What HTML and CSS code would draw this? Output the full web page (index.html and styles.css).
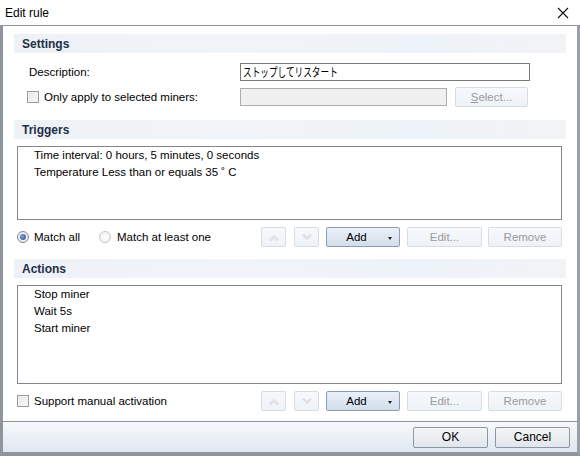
FILE: index.html
```html
<!DOCTYPE html>
<html>
<head>
<meta charset="utf-8">
<link rel="stylesheet" href="styles.css">
</head>
<body>
<div class="window">
  <div class="titlebar">
    <span class="title">Edit rule</span>
    <svg class="close" width="12" height="12" viewBox="0 0 12 12"><path d="M1 1 L11 11 M11 1 L1 11" stroke="#111" stroke-width="1.1" fill="none"/></svg>
  </div>
  <div class="client">
    <div class="main">
      <div class="header">Settings</div>
      <div class="row desc-row">
        <span class="label desc-label">Description:</span>
        <div class="textbox"><span class="jp">ストップしてリスタート</span></div>
      </div>
      <div class="row sel-row">
        <span class="check"></span>
        <span class="label sel-label">Only apply to selected miners:</span>
        <div class="textbox disabled"></div>
        <div class="btn dis select-btn"><span><u>S</u>elect...</span></div>
      </div>

      <div class="header hdr-trig">Triggers</div>
      <div class="listbox trig-list">
        <div class="item">Time interval: 0 hours, 5 minutes, 0 seconds</div>
        <div class="item">Temperature Less than or equals 35 ˚ C</div>
      </div>
      <div class="row ctl-row">
        <span class="radio on"><span class="dot"></span></span>
        <span class="label r1">Match all</span>
        <span class="radio off"></span>
        <span class="label r2">Match at least one</span>
        <div class="btns">
          <div class="btn dis small"><svg width="10" height="7" viewBox="0 0 10 7"><path d="M1 5.5 L5 1.5 L9 5.5 L8 6.5 L5 3.5 L2 6.5 Z" fill="none" stroke="#b4b9c0" stroke-width="0.6"/></svg></div>
          <div class="btn dis small"><svg width="10" height="7" viewBox="0 0 10 7"><path d="M1 1.5 L5 5.5 L9 1.5 L8 0.5 L5 3.5 L2 0.5 Z" fill="none" stroke="#b4b9c0" stroke-width="0.6"/></svg></div>
          <div class="btn add"><span class="add-txt">Add</span><span class="caret"></span></div>
          <div class="btn dis edit">Edit...</div>
          <div class="btn dis remove">Remove</div>
        </div>
      </div>

      <div class="header hdr-act">Actions</div>
      <div class="listbox act-list">
        <div class="item">Stop miner</div>
        <div class="item">Wait 5s</div>
        <div class="item">Start miner</div>
      </div>
      <div class="row ctl-row">
        <span class="check ck2"></span>
        <span class="label">Support manual activation</span>
        <div class="btns">
          <div class="btn dis small"><svg width="10" height="7" viewBox="0 0 10 7"><path d="M1 5.5 L5 1.5 L9 5.5 L8 6.5 L5 3.5 L2 6.5 Z" fill="none" stroke="#b4b9c0" stroke-width="0.6"/></svg></div>
          <div class="btn dis small"><svg width="10" height="7" viewBox="0 0 10 7"><path d="M1 1.5 L5 5.5 L9 1.5 L8 0.5 L5 3.5 L2 0.5 Z" fill="none" stroke="#b4b9c0" stroke-width="0.6"/></svg></div>
          <div class="btn add"><span class="add-txt">Add</span><span class="caret"></span></div>
          <div class="btn dis edit">Edit...</div>
          <div class="btn dis remove">Remove</div>
        </div>
      </div>
    </div>
    <div class="footer">
      <div class="btn std ok">OK</div>
      <div class="btn std cancel">Cancel</div>
    </div>
  </div>
</div>
</body>
</html>
```
FILE: styles.css
```css
* { box-sizing: border-box; }
html, body { margin: 0; padding: 0; }
body {
  width: 580px; height: 456px; overflow: hidden;
  font-family: "Liberation Sans", Arial, sans-serif;
  font-size: 11.5px; color: #000; background: #fff;
}
.window { width: 580px; height: 456px; display: flex; flex-direction: column; }
.titlebar {
  height: 26px; flex: none; background: #fff;
  border-bottom: 1px solid #8e949c;
  display: flex; align-items: center; justify-content: space-between;
  padding: 1px 11px 0 5px;
}
.title { font-size: 12px; }
.close { display: block; }
.client {
  flex: 1; display: flex; flex-direction: column;
  border-left: 3px solid #8f959d; border-right: 3px solid #9aa0a8; border-bottom: 4px solid #8f959d;
  background: #fff;
}
.main { flex: 1; padding: 8px 11px 0 11px; display: flex; flex-direction: column; }
.header {
  height: 19px; flex: none;
  background: linear-gradient(90deg, #eef2f7 0%, #f1f4f8 40%, #eef3f9 75%, #f2f3f5 100%);
  font-weight: bold; color: #1e2f46; padding-left: 8px;
  display: flex; align-items: center; font-size: 12px;
}
.hdr-trig { margin-top: 13px; }
.hdr-act { margin-top: 12px; }
.row { display: flex; align-items: center; flex: none; }
.desc-row { margin-top: 10px; height: 18px; }
.desc-label { margin-left: 15px; width: 211px; }
.textbox {
  height: 18px; width: 290px; border: 1px solid #7a7a7a; background: #fff;
  display: flex; align-items: center; padding-left: 2px; overflow: hidden;
}
.jp {
  font-family: "Noto Sans CJK JP", sans-serif; font-size: 12px;
  display: inline-block; transform: scaleX(0.72); transform-origin: left center;
  white-space: nowrap; line-height: 14px;
}
.sel-row { margin-top: 6px; height: 20px; }
.check {
  width: 12px; height: 12px; border: 1px solid #9a9a9a; background: linear-gradient(135deg, #e6e6e6, #fafafa);
  flex: none; margin-left: 13px; box-shadow: inset 0 0 0 1px #f3f3f3;
}
.sel-label { margin-left: 5px; width: 196px; }
.textbox.disabled { width: 207px; background: #f0f0f0; border-color: #adadad; }
.btn {
  height: 20px; border: 1px solid #acacac; border-radius: 2px;
  display: flex; align-items: center; justify-content: center; flex: none;
}
.btn.dis {
  border-color: #d5dde6; background: linear-gradient(#f7f9fc, #eef2f7); color: #9a9a9a;
}
.select-btn { width: 73px; margin-left: 8px; }
.select-btn u { text-decoration: underline; }
.listbox {
  flex: none; margin: 7px 4px 0 3px; border: 1px solid #828790; background: #fff;
  padding: 0 0 0 16px;
}
.item { height: 17px; line-height: 17px; white-space: nowrap; }
.trig-list { height: 74px; }
.act-list { height: 99px; }
.ctl-row { margin-top: 7px; height: 20px; padding-left: 3px; padding-right: 4px; }
.radio {
  width: 12px; height: 12px; border-radius: 50%; border: 1px solid #9a9a9a; flex: none;
  background: radial-gradient(#fafafa, #e2e2e2);
  display: flex; align-items: center; justify-content: center;
}
.radio.on { border-color: #7f8a97; }
.radio .dot { width: 6px; height: 6px; border-radius: 50%; background: radial-gradient(circle at 40% 40%, #7ea3d8, #24477e); }
.radio.off { border-color: #c8c8c8; background: radial-gradient(#ffffff, #ececec); margin-left: 0; }
.r1 { margin-left: 5px; width: 65px; }
.r2 { margin-left: 6px; }
.ck2 { margin-left: 0; }
.ck2 + .label { margin-left: 5px; }
.btns { margin-left: auto; display: flex; align-items: center; }
.btn.small { width: 25px; }
.btn.small + .btn.small { margin-left: 8px; }
.btn.add {
  width: 74px; margin-left: 7px; position: relative;
  border-color: #8c9db3; background: linear-gradient(#e9f0f8, #d3deeb);
}
.add-txt { margin-left: -13px; }
.caret {
  position: absolute; right: 7px; top: 9px; width: 0; height: 0;
  border-left: 2.5px solid transparent; border-right: 2.5px solid transparent; border-top: 3px solid #222;
}
.btn.edit { width: 75px; margin-left: 7px; }
.btn.remove { width: 74px; margin-left: 6px; }
.footer {
  height: 31px; flex: none; border-top: 1px solid #8e949c; margin-top: 10px;
  background: linear-gradient(#f7f9fb, #dfe7f1);
  display: flex; align-items: center; justify-content: flex-end; padding: 0 7px 0 0;
}
.btn.std {
  width: 75px; height: 21px; border-color: #8b97a5; background: linear-gradient(#f4f5f6, #e1e6ec);
  font-size: 12px;
}
.cancel { margin-left: 7px; width: 74px; }
```
